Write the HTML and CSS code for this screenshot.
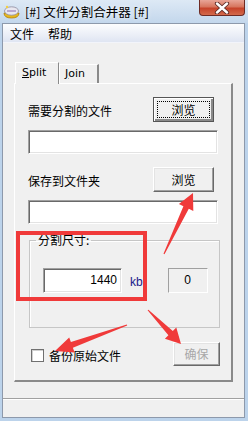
FILE: index.html
```html
<!DOCTYPE html>
<html lang="zh-CN">
<head>
  <meta charset="UTF-8" />
  <meta name="viewport" content="width=device-width, initial-scale=1" />
  <title>文件分割合并器</title>
  <link rel="stylesheet" href="styles.css">
</head>
<body>

  <div class="window">
    <div class="titlebar">
      <svg class="app-icon" viewBox="0 0 17 15">
        <path d="M1 9 Q1 14 8.5 14 Q16 14 16 9 Z" fill="#e8b81c" stroke="#b07d08" stroke-width="0.8"/>
        <ellipse cx="8.5" cy="7" rx="7" ry="4.2" fill="#e9e7ef" stroke="#8d8a9c" stroke-width="0.8"/>
        <path d="M4 7 L13 7" stroke="#9a7fb8" stroke-width="1.2"/>
        <circle cx="4" cy="3" r="1.2" fill="#f3d040"/>
      </svg>
      <span class="title">[#] 文件分割合并器 [#]</span>
      <div class="close-btn">
        <svg viewBox="0 0 16 12">
          <path d="M3 1.5 L13 10.5 M13 1.5 L3 10.5" stroke="#5a2a26" stroke-width="4.2" stroke-linecap="round"/>
          <path d="M3 1.5 L13 10.5 M13 1.5 L3 10.5" stroke="#fff" stroke-width="2.4" stroke-linecap="round"/>
        </svg>
      </div>
    </div>

    <div class="client">
      <div class="menubar">
        <span class="menu-item">文件</span>
        <span class="menu-item">帮助</span>
      </div>

      <div class="content">
        <div class="tabs">
          <div class="tab active"><u>S</u>plit</div>
          <div class="tab"><u>J</u>oin</div>
        </div>

        <div class="panel">
          <div class="row">
            <span class="label">需要分割的文件</span>
            <button class="btn default"><span class="focus">浏览</span></button>
          </div>
          <div class="textbox"></div>

          <div class="row row-second">
            <span class="label">保存到文件夹</span>
            <button class="btn">浏览</button>
          </div>
          <div class="textbox"></div>

          <fieldset class="group">
            <legend>分割尺寸:</legend>
            <div class="size-row">
              <div class="textbox size-input">1440</div>
              <span class="unit">kb</span>
              <div class="static-box">0</div>
            </div>
          </fieldset>

          <div class="bottom-row">
            <span class="checkbox"></span>
            <span class="check-label">备份原始文件</span>
            <button class="btn disabled">确保</button>
          </div>
        </div>
      </div>

      <div class="statusbar"></div>
    </div>
  </div>

  <!-- 标注 -->
  <div class="mark-rect"></div>
  <svg class="arrows" viewBox="0 0 248 421">
    <polygon points="164.5,254.2 188.8,208.8 193.3,210.9 193,193 178.9,204.1 183.4,206.2 163.5,253.8" />
    <polygon points="127.2,325.5 72.9,347.7 74.6,352.4 55,351 69.2,337.4 70.9,342.1 126.8,324.5" />
    <polygon points="147.6,310.3 168.4,335.3 164.9,338.8 181,344 176.3,327.6 172.8,331.1 148.4,309.7" />
  </svg>

</body>
</html>
```

FILE: styles.css
```css
* {
  box-sizing: border-box;
}

body {
  margin: 0;
  width: 248px;
  height: 421px;
  overflow: hidden;
  position: relative;
  background-color: #bcd3eb;
  font-family: "Noto Sans CJK SC", "Noto Sans", sans-serif;
  font-size: 12px;
  color: #000;
}

.window {
  display: flex;
  flex-direction: column;
  height: 421px;
}

/* 标题栏 */
.titlebar {
  height: 23px;
  display: flex;
  align-items: flex-start;
  padding-left: 3px;
  background: linear-gradient(180deg, #dde9f5 0%, #cfdff0 55%, #c3d7ec 100%);
}

.app-icon {
  width: 17px;
  height: 15px;
  margin-top: 4px;
}

.title {
  margin-left: 5px;
  line-height: 24px;
  font-size: 12.5px;
  color: #000;
  text-shadow: 0 0 4px #fff;
}

.close-btn {
  margin-left: auto;
  margin-right: 3px;
  width: 46px;
  height: 16px;
  border: 1px solid #6e2b24;
  border-top: none;
  border-radius: 0 0 4px 4px;
  background: linear-gradient(180deg, #e8a597 0%, #d7765f 45%, #c6432a 55%, #d36a4c 100%);
  display: flex;
  align-items: center;
  justify-content: center;
}

.close-btn svg {
  width: 16px;
  height: 12px;
}

/* 客户区 */
.client {
  flex: 1;
  display: flex;
  flex-direction: column;
  margin: 0 3px 3px 2px;
  border: 1px solid #8d99ab;
  background-color: #f0f0f0;
}

.menubar {
  height: 19px;
  display: flex;
  padding-left: 2px;
  background: linear-gradient(180deg, #fcfdfe 0%, #eef1f8 50%, #dfe5f2 100%);
  border-bottom: 1px solid #f2f4fa;
}

.menu-item {
  padding: 0 7px 0 5px;
  line-height: 19px;
  margin-right: 2px;
}

.content {
  flex: 1;
  padding: 19px 11px 0 11px;
}

/* 选项卡 */
.tabs {
  display: flex;
  align-items: flex-end;
  padding-left: 1px;
  height: 21px;
  font-family: "DejaVu Sans", "Liberation Sans", sans-serif;
  font-size: 11px;
}

.tab {
  height: 19px;
  padding: 0 5px;
  line-height: 18px;
  border-top: 1px solid #fff;
  border-left: 1px solid #fff;
  border-right: 2px solid #8a8a8a;
  background-color: #f0f0f0;
  width: 40px;
}

.tab.active {
  position: relative;
  z-index: 1;
  height: 22px;
  width: 44px;
  margin-bottom: -1px;
  padding-left: 6px;
  line-height: 20px;
  border-right-width: 1px;
}

.panel {
  height: 299px;
  border-top: 1px solid #fff;
  border-left: 1px solid #fff;
  border-right: 2px solid #8a8a8a;
  border-bottom: 2px solid #8a8a8a;
  padding: 13px 0 0 13px;
}

.row {
  display: flex;
  align-items: center;
  justify-content: space-between;
  height: 25px;
  padding-right: 17px;
}

.row-second {
  margin-top: 13px;
}

.label {
  padding-top: 3px;
  line-height: 16px;
}

/* 按钮 */
.btn {
  width: 61px;
  height: 25px;
  padding: 0;
  font-family: inherit;
  font-size: 12px;
  color: #000;
  background-color: #f0f0f0;
  border: 1px solid;
  border-color: #fff #696969 #696969 #fff;
  box-shadow: inset -1px -1px 0 #a0a0a0, inset 1px 1px 0 #e3e3e3;
  line-height: 20px;
}

.btn.default {
  border: 1px solid #555;
  box-shadow: inset 1px 1px 0 #fff, inset -2px -2px 0 #8a8a8a;
  padding: 3px;
}

.btn .focus {
  display: block;
  height: 17px;
  line-height: 15px;
  border: 1px dotted #000;
}

.btn.disabled {
  width: 47px;
  height: 24px;
  color: #a8a8a8;
  margin-left: auto;
}

/* 文本框 */
.textbox {
  width: 190px;
  height: 24px;
  margin-top: 8px;
  background-color: #fff;
  border: 1px solid;
  border-color: #a0a0a0 #fff #fff #a0a0a0;
  box-shadow: inset 1px 1px 0 #696969, inset -1px -1px 0 #e3e3e3;
}

/* 分组框 */
.group {
  margin: 9px 0 0 1px;
  width: 190px;
  height: 95px;
  padding: 21px 11px 0 13px;
  border: 1px solid #c6c6c6;
  box-shadow: inset 1px 1px 0 #fff;
}

.group legend {
  margin-left: -7px;
  padding: 0 2px;
  line-height: 14px;
}

.size-row {
  display: flex;
  align-items: center;
}

.size-input {
  margin-top: 0;
  width: 79px;
  height: 25px;
  text-align: right;
  padding-right: 4px;
  line-height: 22px;
  font-family: "Liberation Sans", sans-serif;
  font-size: 12px;
}

.unit {
  margin-left: 8px;
  padding-top: 3px;
  font-family: "Liberation Sans", sans-serif;
  font-size: 12px;
  color: #1a1a8a;
}

.static-box {
  margin-left: 25px;
  width: 40px;
  height: 25px;
  text-align: center;
  line-height: 23px;
  font-family: "Liberation Sans", sans-serif;
  font-size: 12px;
  border: 1px solid;
  border-color: #a0a0a0 #fff #fff #a0a0a0;
}

.bottom-row {
  display: flex;
  align-items: center;
  height: 24px;
  margin-top: 14px;
  padding-left: 3px;
  padding-right: 11px;
}

.checkbox {
  width: 13px;
  height: 13px;
  margin-top: 2px;
  background-color: #fff;
  border: 1px solid #707070;
  box-shadow: inset 1px 1px 0 #d0d0d0;
}

.check-label {
  margin-left: 5px;
  padding-top: 3px;
  line-height: 16px;
}

/* 状态栏 */
.statusbar {
  height: 19px;
  border-top: 1px solid #a0a0a0;
  box-shadow: inset 0 1px 0 #fff;
}

/* 红色标注 */
.mark-rect {
  position: absolute;
  left: 16px;
  top: 231px;
  width: 131px;
  height: 70px;
  border: 4px solid #f03a3a;
}

.arrows {
  position: absolute;
  left: 0;
  top: 0;
  width: 248px;
  height: 421px;
  fill: #f03a3a;
}
```
